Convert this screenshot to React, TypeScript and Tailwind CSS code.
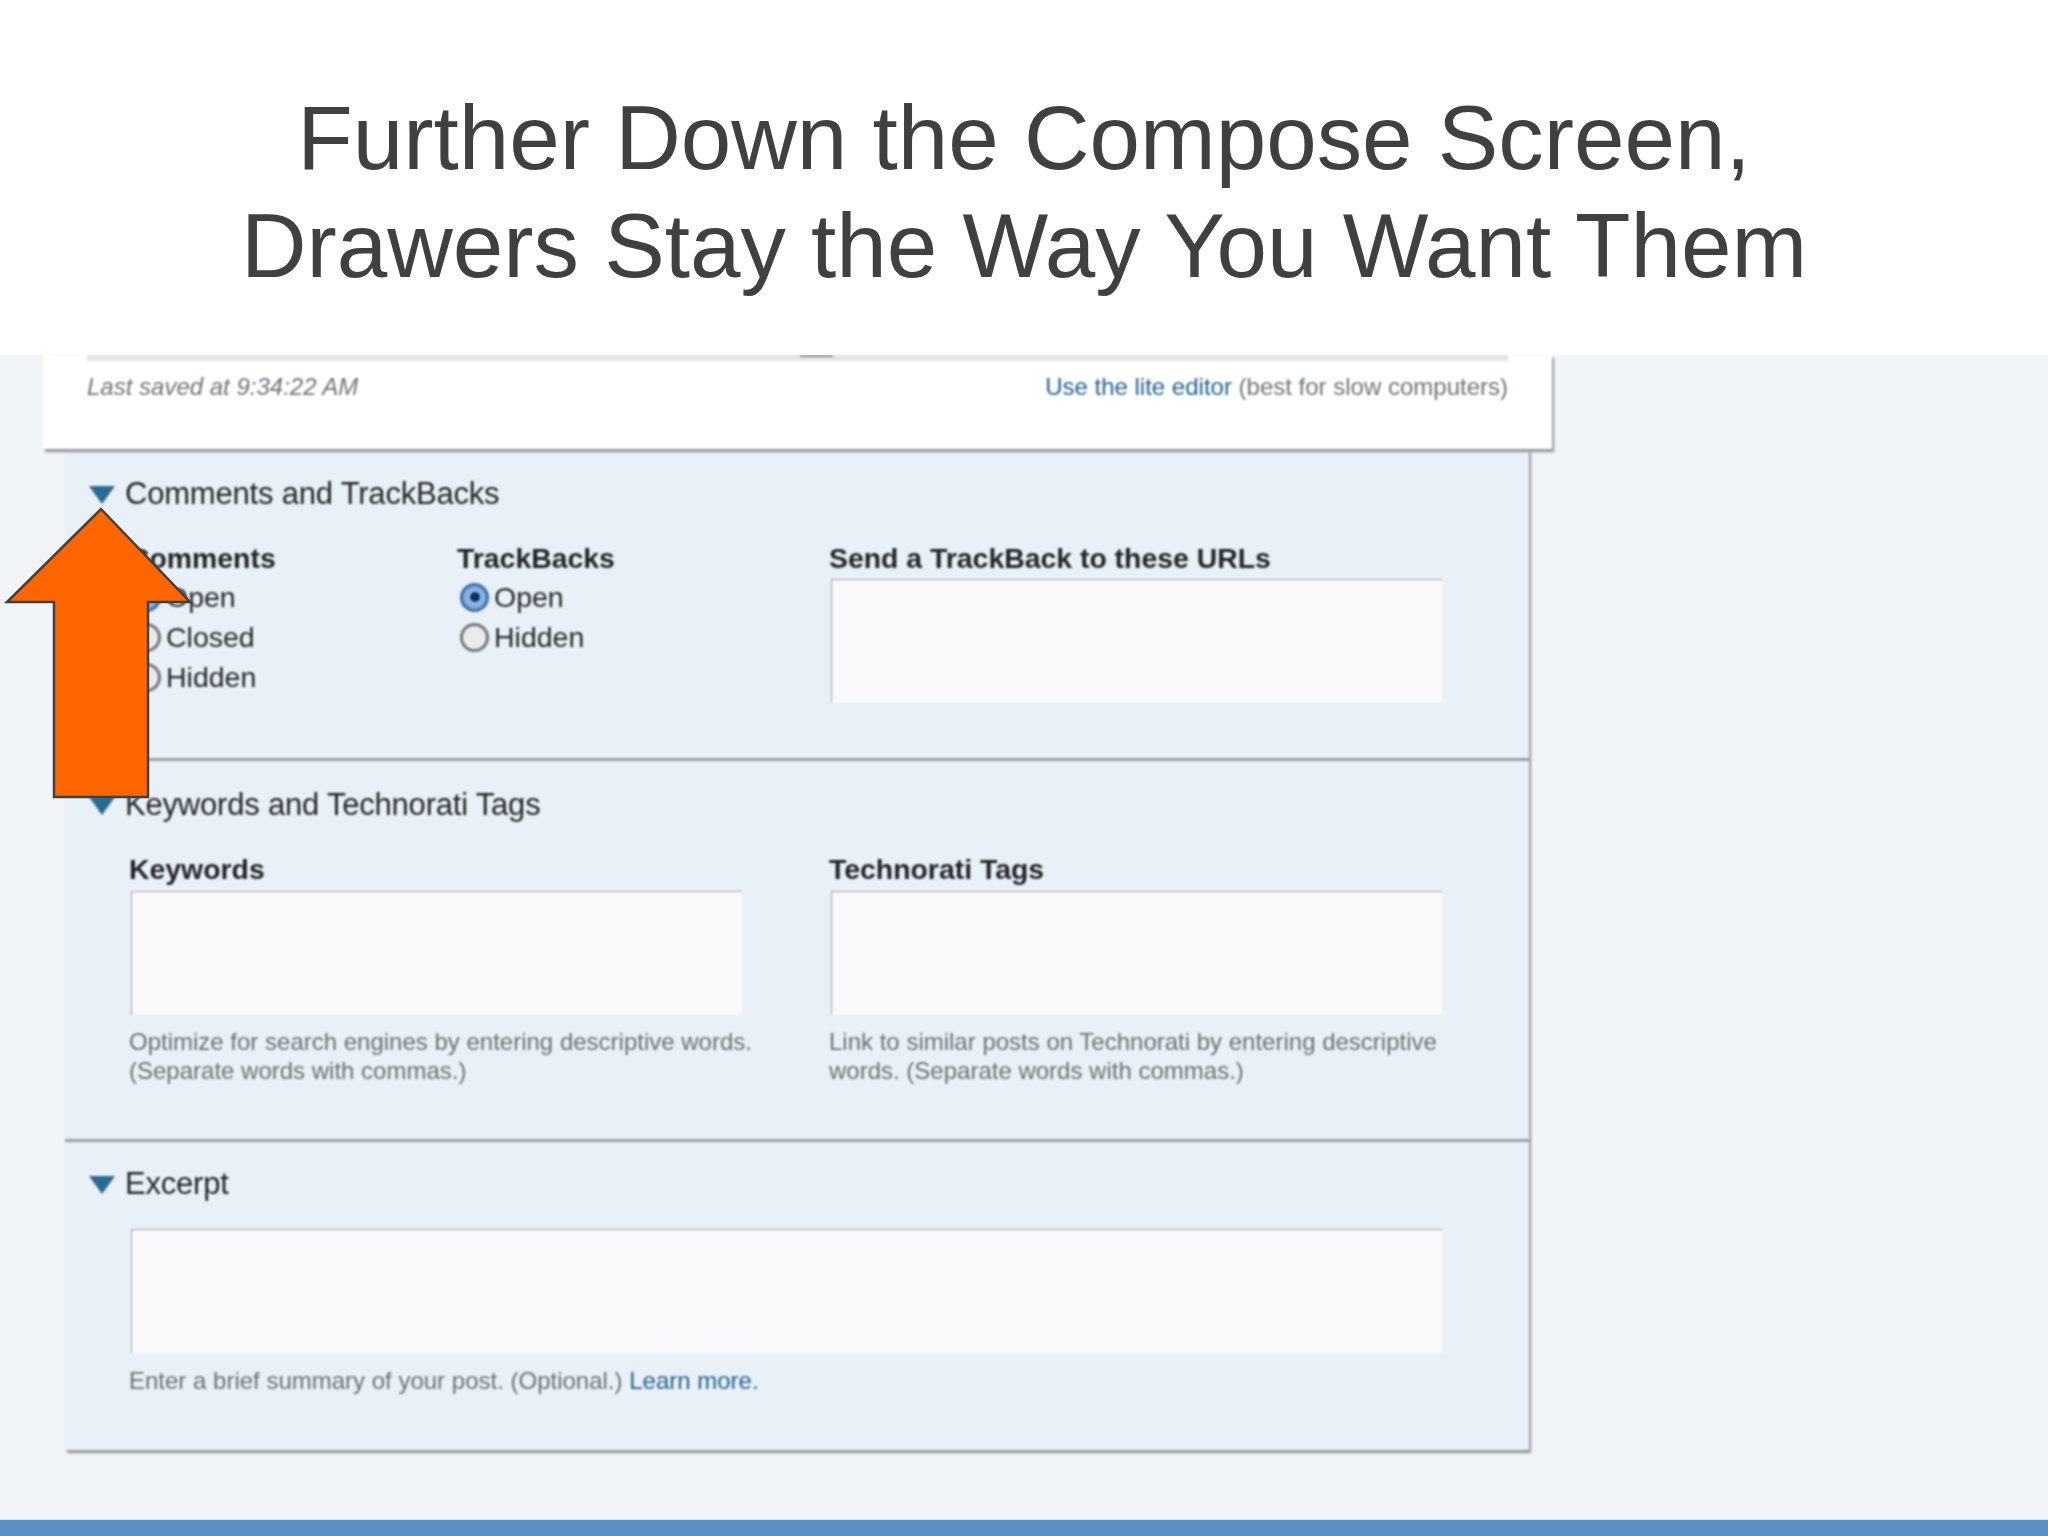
import React from "react";

function Tri() {
  return (
    <svg width="26" height="18" viewBox="0 0 26 18" className="shrink-0 mt-[1px]">
      <path d="M0 0H26L13 18Z" fill="#2a6a90" />
    </svg>
  );
}

function Heading({ children }: { children: React.ReactNode }) {
  return (
    <div className="flex items-center h-[30px] pl-[24px] gap-[10px] text-[31px] leading-[30px] text-[#23272b] tracking-[-0.2px]">
      <Tri />
      <span>{children}</span>
    </div>
  );
}

function Label({ children }: { children: React.ReactNode }) {
  return <div className="h-[30px] text-[28.4px] leading-[30px] font-bold text-[#1f2327]">{children}</div>;
}

function Box({ className }: { className: string }) {
  return <div className={"h-[124px] ml-[2px] bg-[#f9f9fb] border-t-[1.5px] border-l-[1.5px] border-[#9ca0a5] " + className} />;
}

function Radio({ label, checked }: { label: string; checked?: boolean }) {
  return (
    <div className="flex items-center h-[40px] gap-[5px] text-[28.5px] leading-[40px] text-[#25292d]">
      {checked ? (
        <div className="w-[29px] h-[29px] ml-[3px] rounded-full border-[3px] border-[#3f6fa8] bg-[radial-gradient(circle,#a9c9ea_0%,#7fb0e0_60%,#5b8fcb_100%)] flex items-center justify-center">
          <div className="w-[10px] h-[10px] rounded-full bg-[#0f2f66]" />
        </div>
      ) : (
        <div className="w-[29px] h-[29px] ml-[3px] rounded-full border-[3px] border-[#73777b] bg-[#e9ebec]" />
      )}
      <span>{label}</span>
    </div>
  );
}

function Help({ children }: { children: React.ReactNode }) {
  return <div className="text-[24px] leading-[29px] text-[#6b7076]">{children}</div>;
}

export default function App() {
  return (
    <div className="relative w-[2048px] h-[1536px] overflow-hidden flex flex-col bg-[#f1f4f8] font-['Liberation_Sans',Arial,sans-serif]">
      <header className="relative z-10 h-[355px] shrink-0 bg-white pt-[84px] text-center text-[90.8px] leading-[108px] text-[#404040]">
        <div>Further Down the Compose Screen,</div>
        <div>Drawers Stay the Way You Want Them</div>
      </header>

      <main className="flex-1 pl-[43px] flex flex-col blur-[0.8px]">
        <div className="relative z-10 w-[1509px] h-[94px] bg-white px-[44px] shadow-[2px_3px_2px_#90959b]">
          <div className="relative h-[6px] bg-[#e6e6e6]">
            <div className="absolute left-[713px] top-0 w-[33px] h-[2px] bg-[#8a8a8a]" />
          </div>
          <div className="flex justify-between items-center h-[52px] text-[24px] text-[#6f7379]">
            <span className="italic">Last saved at 9:34:22 AM</span>
            <span>
              <span className="text-[#23628c]">Use the lite editor</span> (best for slow computers)
            </span>
          </div>
        </div>

        <div className="ml-[22px] w-[1464px] bg-[#e9f0f7] shadow-[2px_3px_2px_#90959b]">
          <section className="h-[312px] pt-[30px] border-b-[3px] border-[#9aa0a6]">
            <Heading>Comments and TrackBacks</Heading>
            <div className="flex pl-[64px] mt-[34px]">
              <div className="w-[328px]">
                <Label>Comments</Label>
                <div className="mt-[4px]">
                  <Radio label="Open" checked />
                  <Radio label="Closed" />
                  <Radio label="Hidden" />
                </div>
              </div>
              <div className="w-[372px]">
                <Label>TrackBacks</Label>
                <div className="mt-[4px]">
                  <Radio label="Open" checked />
                  <Radio label="Hidden" />
                </div>
              </div>
              <div>
                <Label>Send a TrackBack to these URLs</Label>
                <Box className="mt-[6px] w-[611px]" />
              </div>
            </div>
          </section>

          <section className="h-[381px] pt-[29px] border-b-[3px] border-[#9aa0a6]">
            <Heading>Keywords and Technorati Tags</Heading>
            <div className="flex pl-[64px] mt-[34px]">
              <div className="w-[700px]">
                <Label>Keywords</Label>
                <Box className="mt-[7px] w-[611px]" />
                <div className="mt-[12px]">
                  <Help>Optimize for search engines by entering descriptive words.</Help>
                  <Help>(Separate words with commas.)</Help>
                </div>
              </div>
              <div>
                <Label>Technorati Tags</Label>
                <Box className="mt-[7px] w-[611px]" />
                <div className="mt-[12px]">
                  <Help>Link to similar posts on Technorati by entering descriptive</Help>
                  <Help>words. (Separate words with commas.)</Help>
                </div>
              </div>
            </div>
          </section>

          <section className="h-[308px] pt-[27px]">
            <Heading>Excerpt</Heading>
            <div className="pl-[64px] mt-[30px]">
              <Box className="w-[1311px]" />
              <div className="mt-[13px]">
                <Help>
                  Enter a brief summary of your post. (Optional.) <span className="text-[#23628c]">Learn more.</span>
                </Help>
              </div>
            </div>
          </section>
        </div>
      </main>

      <div className="h-[17px] shrink-0 bg-[#5b8fc4] border-t-[1px] border-[#d8e6f3]" />

      <svg className="absolute left-[0px] top-[500px] z-20" width="200" height="305" viewBox="0 500 200 305">
        <path d="M101 509 L190 602 H148 V797 H54 V602 H7 Z" fill="#ff6600" stroke="#404040" strokeWidth="2.5" />
      </svg>
    </div>
  );
}
